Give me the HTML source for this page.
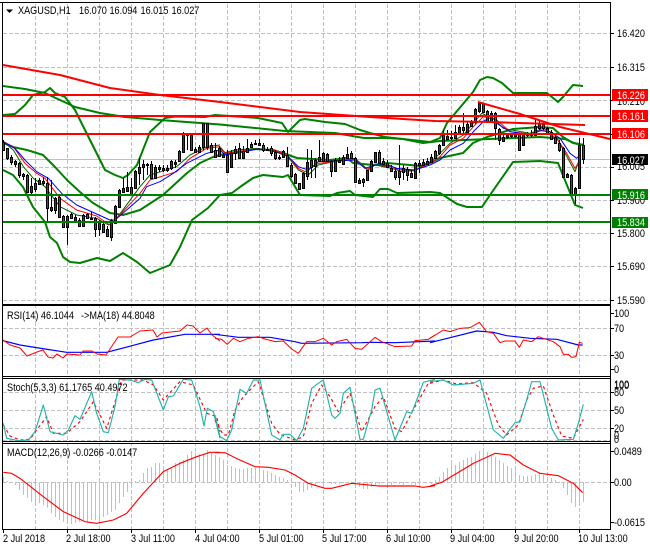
<!DOCTYPE html>
<html><head><meta charset="utf-8"><style>
html,body{margin:0;padding:0;background:#fff}
svg{display:block}
text{font-family:"Liberation Sans",sans-serif;font-size:11px;fill:#000;transform-box:fill-box;transform-origin:0 50%;transform:scaleX(.83)}
</style></head><body>
<svg width="650" height="550" viewBox="0 0 650 550">
<rect width="650" height="550" fill="#fff"/>
<!-- grid -->
<g stroke="#c0c0c0" fill="none" stroke-dasharray="4 2" shape-rendering="crispEdges">
<path d="M35.5 4V529M67.5 4V529M99.5 4V529M131.5 4V529M163.5 4V529M195.5 4V529M227.5 4V529M259.5 4V529M291.5 4V529M323.5 4V529M355.5 4V529M387.5 4V529M419.5 4V529M451.5 4V529M483.5 4V529M515.5 4V529M547.5 4V529M579.5 4V529"/>
<path d="M3 33.5H610M3 67.5H610M3 100.5H610M3 134.5H610M3 167.5H610M3 200.5H610M3 233.5H610M3 266.5H610M3 300.5H610"/>
<path d="M3 328.5H610M3 355.5H610M3 392.5H610M3 410.5H610M3 428.5H610M3 440.5H610M3 482.5H610"/>
</g>
<path d="M3 159.5H610" stroke="#c0c0c0" shape-rendering="crispEdges"/>
<!-- panel separators cover -->
<rect x="3" y="304" width="607" height="2" fill="#fff"/><rect x="3" y="376" width="607" height="3" fill="#fff"/><rect x="3" y="441" width="607" height="3" fill="#fff"/>
<!-- MA long green & bollinger -->
<g fill="none" stroke="#008000" stroke-width="2" stroke-linejoin="round">
<polyline points="3,86 25,89 45,93 75,107 100,113 125,117 160,120 220,124.5 285,131 335,133 364,138 387,138 403,139 423,143 440,141 490,139 540,137 565,139 574,143 584,145"/>
<polyline points="3,115 15,114 25,105 33,95 45,92 50,88 55,93 65,97 75,110 85,130 95,150 105,170 115,175 123,178 128,175 137,165 150,132 165,118 175,116.5 205,117 215,115 258,118 282,123 288,132 295,125 300,120 305,119 325,122 345,124 360,130 370,133 385,137 430,142 440,138 447,123 473,92 480,80 487,77 493,78 502,83 513,93 547,93 558,102 563,97 573,85 583,86"/>
<polyline points="3,143 13,147 27,150 43,155 55,167 67,180 80,192 93,203 110,213 123,215 140,210 163,195 187,173 200,163 213,157 220,155 230,153 240,152 253,149 273,150 283,153 297,158 313,159 330,160 347,158 353,163 373,165 387,163 410,165 420,166 430,163 440,158 463,153 473,143 487,137 513,129 540,127 553,128 563,137 573,143 583,145"/>
<polyline points="3,170 13,175 23,187 33,207 45,222 50,237 57,243 63,257 70,262 80,263 97,258 110,261 123,253 137,262 150,273 170,265 180,247 192,220 208,208 220,195 232,193 240,187 253,178 263,175 283,177 288,175 300,195 330,196 337,193 350,191 355,195 373,197 380,189 388,189 397,193 430,192 440,193 457,204 467,207 482,207 490,195 513,162 540,161 558,163 575,205 583,208"/>
</g>
<!-- thin MAs -->
<g fill="none" stroke-width="3" stroke-linejoin="round">
<g transform="translate(0,130) scale(.33333)">
<polyline stroke="#006400" points="10,35 40,60 70,110 100,145 135,170 180,230 230,255 290,265 325,285 345,272 420,170 450,135 530,110 570,75 620,50 660,45"/>
<polyline stroke="#f00" points="10,35 40,50 75,100 110,130 135,145 180,205 230,240 290,258 330,285 345,270 420,190 450,150 530,125 570,85 620,55 660,50"/>
<polyline stroke="#00f" points="10,35 45,55 75,90 110,125 145,145 185,190 230,225 290,252 330,270 345,270 380,240 420,205 440,170 480,155 520,130 560,100 590,85 620,70 660,60"/>
</g>
<g transform="translate(215,100) scale(.33333)">
<polyline stroke="#006400" points="15,140 30,158 60,150 130,145 210,160 250,210 280,225 310,195 385,178 420,175 460,210 480,195 530,205 560,215 600,212 645,185"/>
<polyline stroke="#f00" points="15,145 30,160 60,155 130,147 180,150 215,165 250,205 270,215 310,190 385,182 420,178 455,208 480,195 530,200 550,210 600,210 645,190"/>
<polyline stroke="#00f" points="15,150 30,165 60,160 130,147 180,155 220,170 250,200 280,210 310,185 385,182 420,180 450,205 480,195 520,195 545,205 600,210 645,195"/>
</g>
<g transform="translate(430,60) scale(.33333)">
<polyline stroke="#006400" points="0,308 30,280 60,250 100,225 130,190 155,160 190,175 220,205 300,220 340,205 375,225 400,270 435,335 448,300"/>
<polyline stroke="#f00" points="0,310 30,290 60,255 100,235 130,200 160,170 200,180 240,215 300,222 340,210 380,235 410,280 435,325 450,300"/>
<polyline stroke="#00f" points="0,315 30,300 60,270 100,250 130,215 165,180 200,190 240,215 300,225 330,212 360,215 390,235 420,280 440,295 445,290"/>
</g>
</g>
<!-- wicks -->
<path stroke="#000" fill="none" shape-rendering="crispEdges" d="M3.5 140V151M7.5 148V160M11.5 155V165M15.5 160V167M19.5 162V178M23.5 173V180M27.5 174V192M31.5 178V194M35.5 178V192M39.5 178V185M43.5 177V186M47.5 177V222M51.5 180V212M55.5 197V214M59.5 195V218M63.5 215V227M67.5 215V245M71.5 213V219M75.5 215V222M79.5 218V227M83.5 214V227M87.5 213V219M91.5 212V220M95.5 217V237M99.5 220V236M103.5 223V233M107.5 226V237M111.5 219V241M115.5 205V224M119.5 189V208M123.5 178V193M127.5 172V192M131.5 178V195M135.5 170V189M139.5 158V185M143.5 160V180M147.5 163V175M151.5 161V178M155.5 165V179M159.5 165V172M163.5 165V172M167.5 165V172M171.5 160V170M175.5 160V168M179.5 150V162M183.5 132V153M187.5 133V150M191.5 134V151M195.5 147V153M199.5 145V153M203.5 123V150M207.5 123V150M211.5 143V153M215.5 143V158M219.5 146V157M223.5 153V158M227.5 150V173M231.5 150V168M235.5 146V160M239.5 143V159M243.5 146V159M247.5 139V153M251.5 142V148M255.5 140V145M259.5 139V146M263.5 143V152M267.5 147V151M271.5 146V156M275.5 150V160M279.5 155V160M283.5 150V158M287.5 147V167M291.5 163V178M295.5 173V184M299.5 183V190M303.5 172V189M307.5 149V180M311.5 150V178M315.5 158V178M319.5 140V162M323.5 152V162M327.5 153V162M331.5 160V177M335.5 158V172M339.5 157V163M343.5 155V165M347.5 147V159M351.5 151V159M355.5 157V183M359.5 178V184M363.5 178V187M367.5 170V181M371.5 160V172M375.5 152V163M379.5 150V164M383.5 158V165M387.5 160V168M391.5 165V172M395.5 168V180M399.5 145V185M403.5 165V180M407.5 167V181M411.5 170V178M415.5 162V179M419.5 160V173M423.5 159V166M427.5 158V165M431.5 154V163M435.5 150V159M439.5 144V155M443.5 130V146M447.5 130V140M451.5 131V140M455.5 125V139M459.5 125V135M463.5 113V135M467.5 122V133M471.5 120V127M475.5 108V124M479.5 102V113M483.5 103V113M487.5 110V123M491.5 111V123M495.5 112V140M499.5 128V145M503.5 135V142M507.5 133V139M511.5 133V138M515.5 132V137M519.5 133V151M523.5 133V146M527.5 132V137M531.5 130V137M535.5 118V136M539.5 120V130M543.5 121V130M547.5 127V135M551.5 130V140M555.5 135V144M559.5 140V152M563.5 147V178M567.5 173V178M571.5 174V195M575.5 187V204M579.5 138V189M583.5 138V164"/>
<!-- red bodies -->
<path fill="#f00" stroke="#000" shape-rendering="crispEdges" d="M2.5 142.5h2v8h-2zM6.5 148.5h2v10h-2zM10.5 157.5h2v5h-2zM18.5 163.5h2v12h-2zM26.5 175.5h2v17h-2zM42.5 181.5h2v2h-2zM46.5 183.5h2v25h-2zM58.5 197.5h2v20h-2zM62.5 216.5h2v11h-2zM70.5 214.5h2v4h-2zM78.5 220.5h2v6h-2zM86.5 214.5h2v4h-2zM94.5 218.5h2v11h-2zM102.5 224.5h2v8h-2zM106.5 229.5h2v7h-2zM130.5 187.5h2v8h-2zM150.5 164.5h2v14h-2zM186.5 134.5h2v1h-2zM190.5 135.5h2v15h-2zM206.5 123.5h2v24h-2zM210.5 145.5h2v7h-2zM214.5 150.5h2v7h-2zM226.5 155.5h2v17h-2zM238.5 148.5h2v10h-2zM262.5 145.5h2v5h-2zM270.5 148.5h2v5h-2zM274.5 152.5h2v6h-2zM286.5 155.5h2v11h-2zM290.5 165.5h2v11h-2zM294.5 174.5h2v9h-2zM298.5 183.5h2v6h-2zM310.5 160.5h2v7h-2zM326.5 154.5h2v7h-2zM330.5 161.5h2v10h-2zM350.5 153.5h2v5h-2zM354.5 158.5h2v24h-2zM378.5 152.5h2v11h-2zM386.5 163.5h2v4h-2zM390.5 168.5h2v3h-2zM394.5 171.5h2v6h-2zM406.5 169.5h2v6h-2zM410.5 173.5h2v4h-2zM434.5 151.5h2v7h-2zM462.5 127.5h2v3h-2zM482.5 103.5h2v9h-2zM486.5 111.5h2v11h-2zM494.5 113.5h2v15h-2zM498.5 129.5h2v11h-2zM518.5 134.5h2v16h-2zM542.5 123.5h2v5h-2zM546.5 128.5h2v5h-2zM550.5 132.5h2v7h-2zM554.5 137.5h2v6h-2zM558.5 143.5h2v7h-2zM562.5 148.5h2v29h-2zM570.5 175.5h2v19h-2zM582.5 145.5h2v14h-2z"/>
<!-- green bodies -->
<path fill="#006400" stroke="#000" shape-rendering="crispEdges" d="M14.5 161.5h2v3h-2zM22.5 174.5h2v2h-2zM30.5 186.5h2v6h-2zM34.5 183.5h2v6h-2zM38.5 180.5h2v4h-2zM50.5 207.5h2v3h-2zM54.5 198.5h2v12h-2zM66.5 216.5h2v11h-2zM74.5 217.5h2v4h-2zM82.5 215.5h2v11h-2zM90.5 218.5h2v1h-2zM98.5 222.5h2v7h-2zM110.5 220.5h2v17h-2zM114.5 206.5h2v17h-2zM118.5 190.5h2v17h-2zM122.5 188.5h2v4h-2zM126.5 187.5h2v4h-2zM134.5 171.5h2v17h-2zM138.5 167.5h2v6h-2zM142.5 164.5h2v3h-2zM146.5 164.5h2v1h-2zM154.5 167.5h2v11h-2zM158.5 167.5h2v2h-2zM162.5 168.5h2v2h-2zM166.5 168.5h2v2h-2zM170.5 161.5h2v7h-2zM174.5 162.5h2v2h-2zM178.5 151.5h2v10h-2zM182.5 134.5h2v18h-2zM194.5 149.5h2v3h-2zM198.5 147.5h2v5h-2zM202.5 123.5h2v24h-2zM218.5 148.5h2v8h-2zM222.5 155.5h2v2h-2zM230.5 153.5h2v14h-2zM234.5 149.5h2v4h-2zM242.5 151.5h2v7h-2zM246.5 148.5h2v4h-2zM250.5 144.5h2v3h-2zM254.5 143.5h2v1h-2zM258.5 143.5h2v2h-2zM266.5 149.5h2v1h-2zM278.5 157.5h2v1h-2zM282.5 151.5h2v6h-2zM302.5 173.5h2v15h-2zM306.5 162.5h2v14h-2zM314.5 160.5h2v6h-2zM318.5 157.5h2v4h-2zM322.5 153.5h2v8h-2zM334.5 160.5h2v11h-2zM338.5 160.5h2v2h-2zM342.5 157.5h2v7h-2zM346.5 154.5h2v4h-2zM358.5 180.5h2v3h-2zM362.5 179.5h2v3h-2zM366.5 170.5h2v10h-2zM370.5 161.5h2v10h-2zM374.5 152.5h2v10h-2zM382.5 161.5h2v3h-2zM398.5 171.5h2v6h-2zM402.5 168.5h2v4h-2zM414.5 163.5h2v15h-2zM418.5 163.5h2v2h-2zM422.5 162.5h2v3h-2zM426.5 161.5h2v3h-2zM430.5 157.5h2v5h-2zM438.5 145.5h2v8h-2zM442.5 135.5h2v10h-2zM446.5 136.5h2v3h-2zM450.5 137.5h2v1h-2zM454.5 132.5h2v6h-2zM458.5 127.5h2v7h-2zM466.5 124.5h2v8h-2zM470.5 121.5h2v5h-2zM474.5 109.5h2v13h-2zM478.5 103.5h2v8h-2zM490.5 113.5h2v9h-2zM502.5 137.5h2v4h-2zM506.5 135.5h2v2h-2zM510.5 135.5h2v1h-2zM514.5 134.5h2v2h-2zM522.5 134.5h2v11h-2zM526.5 134.5h2v1h-2zM530.5 134.5h2v1h-2zM534.5 126.5h2v9h-2zM538.5 123.5h2v5h-2zM566.5 174.5h2v3h-2zM574.5 188.5h2v6h-2zM578.5 145.5h2v43h-2z"/>
<!-- horizontal levels -->
<path d="M3 195H610M3 222H610" fill="none" stroke="#008000" shape-rendering="crispEdges" stroke-width="2"/>
<!-- red lines -->
<g fill="none" stroke="#f00" stroke-width="2" stroke-linejoin="round">
<polyline points="3,65 60,75 110,88 160,95 220,102 300,112 370,117 435,121 490,122 585,125"/>
<polyline points="478,102 520,114 560,127 610,139"/>
<path d="M3 95H610M3 116H610M3 134H610" shape-rendering="crispEdges" stroke-width="2"/>
</g>
<!-- RSI -->
<g fill="none" stroke-width="3" stroke-linejoin="round">
<g transform="translate(0,300) scale(.33333)">
<polyline stroke="#00f" stroke-width="3.6" points="9,122 60,135 135,147 200,157 320,157 400,136 460,120 555,103 660,103"/>
<polyline stroke="#f00" stroke-width="3" points="9,120 30,135 60,144 81,168 111,156 129,150 144,171 159,174 171,162 189,174 201,162 240,165 249,153 276,153 291,162 318,165 354,111 390,111 420,93 459,90 471,111 486,99 540,93 561,75 579,78 600,99 621,84 636,105 660,123"/>
</g>
<g transform="translate(215,300) scale(.33333)">
<polyline stroke="#00f" stroke-width="3.6" points="0,103 70,112 165,112 240,125 260,130 440,128 470,127 540,128 660,123"/>
<polyline stroke="#f00" stroke-width="3" points="0,115 20,118 37,133 55,115 75,125 100,115 130,110 150,117 180,125 205,123 230,147 250,160 275,125 300,125 325,115 350,135 365,125 395,118 420,145 440,148 480,112 500,125 540,140 590,138 600,122 640,118 660,105"/>
</g>
<g transform="translate(430,300) scale(.33333)">
<polyline stroke="#00f" stroke-width="3.6" points="0,128 60,113 140,93 190,97 230,107 300,115 380,118 445,135 458,135"/>
<polyline stroke="#f00" stroke-width="3" points="0,115 40,90 60,95 90,85 120,83 148,67 170,95 190,100 210,128 225,123 255,123 268,142 280,120 305,125 325,110 370,125 390,140 400,163 415,163 425,172 438,170 448,127 458,130"/>
</g>
<!-- Stoch -->
<g transform="translate(0,300) scale(.33333)">
<polyline stroke="#f00" stroke-width="3.4" stroke-dasharray="9 9" points="10,375 30,408 60,420 90,418 110,390 140,350 160,400 200,400 240,365 280,305 320,385 350,290 365,240 430,240 460,255 490,300 540,245 580,255 620,340 650,350 660,395"/>
<polyline stroke="#20b2aa" stroke-width="3.4" points="10,370 20,415 55,422 85,420 105,395 130,315 150,395 190,405 205,390 225,347 240,358 275,275 290,340 310,395 325,398 345,320 358,238 390,240 415,248 435,238 455,240 490,330 505,290 520,288 550,238 575,240 600,320 612,378 622,325 640,335 660,415"/>
</g>
<g transform="translate(215,300) scale(.33333)">
<polyline stroke="#f00" stroke-width="3.4" stroke-dasharray="9 9" points="0,360 25,405 40,405 60,330 85,290 130,245 170,370 195,403 240,420 265,410 290,310 320,255 345,290 370,335 405,280 440,395 480,320 505,290 540,385 560,395 600,320 640,250 660,240"/>
<polyline stroke="#20b2aa" stroke-width="3.4" points="0,345 15,410 35,422 50,390 75,268 95,280 115,240 135,240 170,405 195,420 205,403 225,403 245,422 265,385 290,265 310,250 325,240 350,345 360,355 375,340 385,280 405,262 435,418 445,418 470,330 480,270 495,265 540,420 575,335 590,340 625,247 660,238"/>
</g>
<g transform="translate(430,300) scale(.33333)">
<polyline stroke="#f00" stroke-width="3.4" stroke-dasharray="9 9" points="0,250 40,240 80,252 130,248 170,280 205,375 230,405 265,375 290,300 310,265 340,258 370,345 395,408 430,415 460,358"/>
<polyline stroke="#20b2aa" stroke-width="3.4" points="0,245 40,240 70,255 130,250 150,240 190,390 220,415 255,368 270,365 290,300 305,245 330,245 365,385 385,420 430,418 445,370 460,313"/>
</g>
</g>
<!-- MACD hist -->
<path stroke="#c0c0c0" fill="none" shape-rendering="crispEdges" d="M3.5 482V477M7.5 482V481M11.5 482V483M15.5 482V485M19.5 482V490M23.5 482V495M27.5 482V498M31.5 482V502M35.5 482V502M39.5 482V503M43.5 482V505M47.5 482V508M51.5 482V513M55.5 482V517M59.5 482V520M63.5 482V522M67.5 482V523M71.5 482V524M75.5 482V523M79.5 482V522M83.5 482V520M87.5 482V522M91.5 482V520M95.5 482V520M99.5 482V520M103.5 482V517M107.5 482V515M111.5 482V512M115.5 482V510M119.5 482V503M123.5 482V497M127.5 482V492M131.5 482V484M135.5 482V481M139.5 482V480M143.5 482V473M147.5 482V468M151.5 482V467M155.5 482V463M159.5 482V463M163.5 482V467M167.5 482V470M171.5 482V467M175.5 482V463M179.5 482V462M183.5 482V460M187.5 482V455M191.5 482V451M195.5 482V453M199.5 482V454M203.5 482V454M207.5 482V450M211.5 482V453M215.5 482V455M219.5 482V457M223.5 482V460M227.5 482V465M231.5 482V466M235.5 482V468M239.5 482V469M243.5 482V469M247.5 482V468M251.5 482V468M255.5 482V468M259.5 482V468M263.5 482V470M267.5 482V471M271.5 482V473M275.5 482V475M279.5 482V477M283.5 482V478M287.5 482V480M291.5 482V483M295.5 482V487M299.5 482V492M303.5 482V492M307.5 482V490M311.5 482V488M315.5 482V485M319.5 482V483M323.5 482V485M331.5 482V484M335.5 482V484M339.5 482V484M343.5 482V483M347.5 482V483M355.5 482V484M359.5 482V487M363.5 482V489M367.5 482V489M371.5 482V487M375.5 482V485M379.5 482V484M387.5 482V484M391.5 482V485M399.5 482V484M403.5 482V485M411.5 482V484M415.5 482V485M419.5 482V484M431.5 482V484M435.5 482V480M439.5 482V477M443.5 482V472M447.5 482V468M451.5 482V463M455.5 482V465M459.5 482V462M463.5 482V460M467.5 482V458M471.5 482V457M475.5 482V454M479.5 482V451M483.5 482V450M487.5 482V452M491.5 482V455M495.5 482V457M499.5 482V460M503.5 482V463M507.5 482V466M511.5 482V468M515.5 482V470M519.5 482V475M523.5 482V476M527.5 482V476M531.5 482V476M535.5 482V474M539.5 482V473M543.5 482V475M547.5 482V477M551.5 482V478M555.5 482V480M559.5 482V483M563.5 482V488M567.5 482V495M571.5 482V503M575.5 482V507M579.5 482V502M583.5 482V502"/>
<g fill="none" stroke="#f00" stroke-width="3.4" stroke-linejoin="round">
<polyline transform="translate(0,300) scale(.33333)" points="10,517 35,520 60,535 130,590 190,635 255,665 290,670 340,660 380,640 430,580 490,515 540,490 590,470 630,457 660,457"/>
<polyline transform="translate(215,300) scale(.33333)" points="0,458 30,458 70,478 120,500 160,502 210,510 240,525 280,550 330,565 350,565 410,550 490,558 600,558 625,562 660,557"/>
<polyline transform="translate(430,300) scale(.33333)" points="0,558 35,547 130,490 195,460 240,465 280,495 330,520 385,527 430,550 458,578"/>
</g>
<!-- frames -->
<g fill="none" stroke="#000" shape-rendering="crispEdges" stroke-width="1">
<path d="M2.5 2V530M0 2.5H611M610.5 2V530M2.5 304.5H610M2.5 305.5H610M2.5 376.5H610M2.5 378.5H610M2.5 441.5H610M2.5 443.5H610M2 529.5H611"/>
<path d="M3.5 530V533M67.5 530V533M131.5 530V533M195.5 530V533M259.5 530V533M323.5 530V533M387.5 530V533M451.5 530V533M515.5 530V533M579.5 530V533"/>
<path d="M611 33.5h3M611 67.5h3M611 100.5h3M611 134.5h3M611 167.5h3M611 200.5h3M611 233.5h3M611 266.5h3M611 300.5h3M611 313.5h3M611 328.5h3M611 355.5h3M611 369.5h3M611 392.5h3M611 410.5h3M611 428.5h3M611 451.5h3M611 482.5h3M611 522.5h3"/>
</g>
<!-- header -->
<path d="M6 9.5h7l-3.5 3.5z" fill="#000"/>
<text x="18" y="14">XAGUSD,H1</text><text x="79" y="14">16.070</text><text x="109.5" y="14">16.094</text><text x="140.5" y="14">16.015</text><text x="171.5" y="14">16.027</text>
<text x="7" y="319">RSI(14) 46.1044</text><text x="81" y="319">-&gt;MA(18) 44.8048</text>
<text x="7" y="391">Stoch(5,3,3) 61.1765 40.4972</text>
<text x="7" y="456">MACD(12,26,9) -0.0266 -0.0147</text>
<!-- axis labels -->
<text x="617" y="37">16.420</text><text x="617" y="71">16.315</text><text x="617" y="105">16.210</text><text x="617" y="170">16.005</text><text x="617" y="204">15.900</text><text x="617" y="237">15.800</text><text x="617" y="270">15.690</text><text x="617" y="304">15.590</text>
<text x="614" y="317">100</text><text x="614" y="332">70</text><text x="614" y="359">30</text><text x="614" y="373">0</text>
<text x="614" y="388">100</text><text x="614" y="389">100</text><text x="614" y="396">80</text><text x="614" y="414">50</text><text x="614" y="432">20</text><text x="614" y="439">0</text><text x="614" y="443">0</text>
<text x="614" y="455">0.0489</text><text x="614" y="486">0.00</text><text x="614" y="526">-0.0615</text>
<!-- price boxes -->
<rect x="612" y="89" width="36" height="12" fill="#f00"/><rect x="612" y="110" width="36" height="12" fill="#f00"/><rect x="612" y="128" width="36" height="11" fill="#f00"/><rect x="612" y="154" width="36" height="11" fill="#000"/><rect x="612" y="189" width="36" height="11" fill="#008000"/><rect x="612" y="217" width="36" height="11" fill="#008000"/>
<text x="617" y="99" style="fill:#fff">16.226</text><text x="617" y="120" style="fill:#fff">16.161</text><text x="617" y="138" style="fill:#fff">16.106</text><text x="617" y="164" style="fill:#fff">16.027</text><text x="617" y="199" style="fill:#fff">15.916</text><text x="617" y="226" style="fill:#fff">15.834</text>
<!-- time -->
<text x="3" y="542">2 Jul 2018</text><text x="66" y="542">2 Jul 18:00</text><text x="131" y="542">3 Jul 11:00</text><text x="195" y="542">4 Jul 04:00</text><text x="259" y="542">5 Jul 01:00</text><text x="322" y="542">5 Jul 17:00</text><text x="386" y="542">6 Jul 10:00</text><text x="450" y="542">9 Jul 04:00</text><text x="514" y="542">9 Jul 20:00</text><text x="578" y="542">10 Jul 13:00</text>
</svg>
</body></html>
